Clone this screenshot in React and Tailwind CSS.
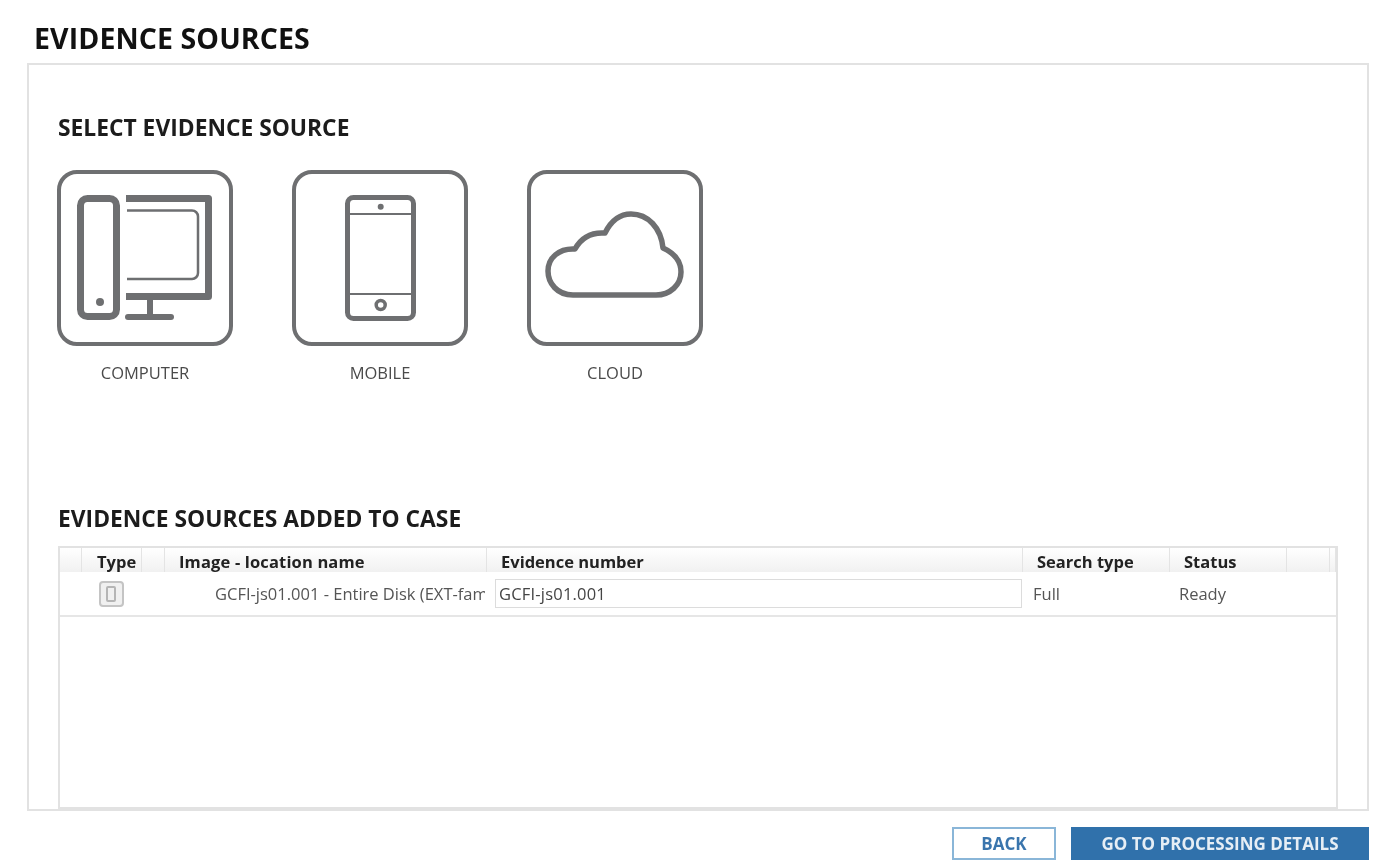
import React from 'react'

const font = { fontFamily: '"Open Sans", "Liberation Sans", sans-serif' }

function ComputerIcon() {
    return (
        <svg width="168" height="168" viewBox="4 4 168 168" fill="none" stroke="#6e6f71">
            <rect x="23.5" y="28.5" width="36" height="118" rx="7" strokeWidth="7" />
            <circle cx="43" cy="132" r="4" fill="#6e6f71" stroke="none" />
            <path d="M69 28.5H151.5V126.5H69" strokeWidth="7" strokeLinejoin="round" />
            <path d="M70 40.5H135a6 6 0 0 1 6 6V103a6 6 0 0 1-6 6H70" strokeWidth="2.5" />
            <path d="M93 127V147" strokeWidth="6" />
            <path d="M71 147H114" strokeWidth="6" strokeLinecap="round" />
        </svg>
    )
}

function MobileIcon() {
    return (
        <svg width="168" height="168" viewBox="4 4 168 168" fill="none" stroke="#6e6f71">
            <rect x="55.5" y="27.5" width="66" height="121" rx="6" strokeWidth="5" />
            <path d="M56 44H121M56 124H121" strokeWidth="2" />
            <circle cx="88.7" cy="36.7" r="3" fill="#6e6f71" stroke="none" />
            <circle cx="88.7" cy="135" r="4.5" strokeWidth="3.5" />
        </svg>
    )
}

function CloudIcon() {
    return (
        <svg width="168" height="168" viewBox="4 4 168 168" fill="none" stroke="#6e6f71">
            <path
                d="M46 125C30 125 21 113 21 101C21 88 32 78 48 79C54 68 64 62 78 63C84 51 93 44 104 44C121 44 134 58 136 78C147 83 154 91 154 102C154 115 143 125 129 125Z"
                strokeWidth="5.5"
                strokeLinejoin="round"
            />
        </svg>
    )
}

function SourceTile({ label, children }) {
    return (
        <div className="flex flex-col items-center w-[176px]">
            <div className="w-[176px] h-[176px] border-4 border-[#6e6f71] rounded-[20px] bg-white">
                {children}
            </div>
            <span className="mt-[17px] text-[16.5px] leading-[20px] text-[#4a4a4a]">{label}</span>
        </div>
    )
}

function HeaderCell({ children, className = '' }) {
    return (
        <div className={'border-r border-[#e4e4e4] text-[16.5px] font-bold text-[#222] leading-[28px] whitespace-nowrap overflow-hidden ' + className}>
            {children}
        </div>
    )
}

export default function App() {
    const columns = 'grid grid-cols-[22px_60px_23px_322px_536px_147px_117px_43px_6px]'

    return (
        <div className="w-[1381px] h-[865px] bg-white overflow-hidden pt-[20px] pl-[27px] blur-[0.7px]" style={font}>
            <h1 className="pl-[7px] text-[28.5px] leading-[36px] font-bold text-[#111] tracking-[0.1px]">EVIDENCE SOURCES</h1>

            <div className="mt-[7px] w-[1342px] h-[748px] border-2 border-[#e2e2e2] pl-[29px] pt-[48px]">
                <h2 className="text-[22.8px] leading-[30px] font-bold text-[#1c1c1c]">SELECT EVIDENCE SOURCE</h2>

                <div className="mt-[27px] flex gap-[59px] -ml-px">
                    <SourceTile label="COMPUTER"><ComputerIcon /></SourceTile>
                    <SourceTile label="MOBILE"><MobileIcon /></SourceTile>
                    <SourceTile label="CLOUD"><CloudIcon /></SourceTile>
                </div>

                <h2 className="mt-[121px] text-[22.8px] leading-[30px] font-bold text-[#1c1c1c]">EVIDENCE SOURCES ADDED TO CASE</h2>

                <div className="mt-[12px] w-[1280px] h-[263px] border-2 border-[#e2e2e2]">
                    <div className={columns + ' h-[24px] bg-gradient-to-b from-white to-[#f1f1f1]'}>
                        <HeaderCell />
                        <HeaderCell className="pl-[15px]">Type</HeaderCell>
                        <HeaderCell />
                        <HeaderCell className="pl-[14px] tracking-[0.15px]">Image - location name</HeaderCell>
                        <HeaderCell className="pl-[14px]">Evidence number</HeaderCell>
                        <HeaderCell className="pl-[14px]">Search type</HeaderCell>
                        <HeaderCell className="pl-[14px]">Status</HeaderCell>
                        <HeaderCell />
                        <HeaderCell />
                    </div>

                    <div className={columns + ' h-[45px] items-center border-b-2 border-[#e6e6e6] text-[16.5px] text-[#555]'}>
                        <div />
                        <div className="flex justify-center pr-[2px]">
                            <div className="w-[25px] h-[26px] border-2 border-[#c4c4c4] rounded-[4px] bg-[#f0f0f0] flex items-center justify-center">
                                <div className="w-[10px] h-[16px] border-2 border-[#b5b5b5] rounded-[2px]" />
                            </div>
                        </div>
                        <div />
                        <div className="ml-[50px] mr-[2px] whitespace-nowrap overflow-hidden leading-[30px]">GCFI-js01.001 - Entire Disk (EXT-family)</div>
                        <div className="pl-[8px] pr-px">
                            <div className="h-[29px] border border-[#dcdcdc] pl-[3px] leading-[28px] whitespace-nowrap text-[#444] tracking-[0.2px]">GCFI-js01.001</div>
                        </div>
                        <div className="pl-[10px] leading-[30px]">Full</div>
                        <div className="pl-[9px] leading-[30px]">Ready</div>
                        <div />
                        <div />
                    </div>
                </div>
            </div>

            <div className="mt-[16px] w-[1342px] flex justify-end gap-[15px] text-[17px] font-bold">
                <button className="w-[104px] h-[33px] border-2 border-[#8ab6d8] bg-white text-[#3a75ad]">BACK</button>
                <button className="w-[298px] h-[33px] bg-[#3071ab] text-[#e6eef5]">GO TO PROCESSING DETAILS</button>
            </div>
        </div>
    )
}
